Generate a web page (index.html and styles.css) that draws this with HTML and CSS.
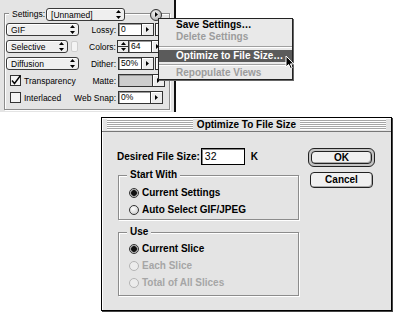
FILE: index.html
```html
<!DOCTYPE html>
<html lang="en">
<head>
  <meta charset="UTF-8">
  <title>Optimize To File Size</title>
  <link rel="stylesheet" href="styles.css">
</head>
<body>
  <div class="palette">
    <div class="group">
      <div class="group-head">
        <span class="head-label">Settings:</span>
        <div class="popup w-name"><span>[Unnamed]</span><svg class="ud" width="5" height="9" viewBox="0 0 5 9"><path d="M2.5 0L5 3H0Z M0 6H5L2.5 9Z"/></svg></div>
        <span class="round-btn"><svg width="3" height="5" viewBox="0 0 3 5"><path d="M0 0L3 2.5L0 5Z"/></svg></span>
      </div>
      <div class="rows">
        <div class="prow">
          <div class="pleft"><div class="popup w-wide"><span>GIF</span><svg class="ud" width="5" height="9" viewBox="0 0 5 9"><path d="M2.5 0L5 3H0Z M0 6H5L2.5 9Z"/></svg></div></div>
          <span class="plabel">Lossy:</span>
          <div class="field w-num">0</div>
          <div class="abtn"><svg width="3" height="5" viewBox="0 0 3 5"><path d="M0 0L3 2.5L0 5Z"/></svg></div>
          <div class="stub"></div>
        </div>
        <div class="prow">
          <div class="pleft"><div class="popup w-mid"><span>Selective</span><svg class="ud" width="5" height="9" viewBox="0 0 5 9"><path d="M2.5 0L5 3H0Z M0 6H5L2.5 9Z"/></svg></div><span class="lock"></span></div>
          <span class="plabel">Colors:</span>
          <div class="spin">
            <svg width="5" height="3" viewBox="0 0 5 3"><path d="M2.5 0L5 3H0Z"/></svg>
            <span class="spin-line"></span>
            <svg width="5" height="3" viewBox="0 0 5 3"><path d="M0 0H5L2.5 3Z"/></svg>
          </div>
          <div class="field w-num">64</div>
          <div class="abtn"><svg width="3" height="5" viewBox="0 0 3 5"><path d="M0 0L3 2.5L0 5Z"/></svg></div>
        </div>
        <div class="prow">
          <div class="pleft"><div class="popup w-wide"><span>Diffusion</span><svg class="ud" width="5" height="9" viewBox="0 0 5 9"><path d="M2.5 0L5 3H0Z M0 6H5L2.5 9Z"/></svg></div></div>
          <span class="plabel">Dither:</span>
          <div class="field w-num">50%</div>
          <div class="abtn"><svg width="3" height="5" viewBox="0 0 3 5"><path d="M0 0L3 2.5L0 5Z"/></svg></div>
          <div class="stub"></div>
        </div>
        <div class="prow">
          <div class="pleft">
            <span class="check"><svg width="11" height="11" viewBox="0 0 11 11"><path d="M2 5.5L4.5 8.5L10.5 0.5" fill="none" stroke="#000" stroke-width="1.4"/></svg></span>
            <span class="check-label">Transparency</span>
          </div>
          <span class="plabel">Matte:</span>
          <div class="field w-matte dim"></div>
          <div class="abtn"><svg width="3" height="5" viewBox="0 0 3 5"><path d="M0 0L3 2.5L0 5Z"/></svg></div>
        </div>
        <div class="prow">
          <div class="pleft">
            <span class="check"></span>
            <span class="check-label">Interlaced</span>
          </div>
          <span class="plabel">Web Snap:</span>
          <div class="field w-snap">0%</div>
          <div class="abtn"><svg width="3" height="5" viewBox="0 0 3 5"><path d="M0 0L3 2.5L0 5Z"/></svg></div>
        </div>
      </div>
    </div>
  </div>

  <div class="dialog">
    <div class="titlebar">
      <span class="stripes"></span>
      <span class="title">Optimize To File Size</span>
      <span class="stripes"></span>
    </div>
    <div class="dlg-body">
      <div class="dlg-left">
        <div class="size-row">
          <span>Desired File Size:</span>
          <span class="size-input">32</span>
          <span class="unit">K</span>
        </div>
        <fieldset class="grp">
          <legend>Start With</legend>
          <div class="opt"><span class="radio on"></span>Current Settings</div>
          <div class="opt"><span class="radio"></span>Auto Select GIF/JPEG</div>
        </fieldset>
        <fieldset class="grp grp-use">
          <legend>Use</legend>
          <div class="opt"><span class="radio on"></span>Current Slice</div>
          <div class="opt off"><span class="radio"></span>Each Slice</div>
          <div class="opt off"><span class="radio"></span>Total of All Slices</div>
        </fieldset>
      </div>
      <div class="btn-col">
        <div class="ring"><div class="btn">OK</div></div>
        <div class="btn cancel">Cancel</div>
      </div>
    </div>
  </div>

  <div class="menu">
    <div class="mi">Save Settings…</div>
    <div class="mi off">Delete Settings</div>
    <div class="sep first"></div>
    <div class="mi hot">Optimize to File Size…</div>
    <div class="sep"></div>
    <div class="mi off">Repopulate Views</div>
  </div>

  <svg class="cursor" width="10" height="15" viewBox="0 0 10 15">
    <path d="M1 1V12L3.6 9.5L5.5 13.6L7.2 12.8L5.4 8.9H8.8Z" fill="#000" stroke="#fff" stroke-width="1"/>
  </svg>
</body>
</html>
```

FILE: styles.css
```css
body {
  margin: 0;
  background: #fff;
  font-family: 'Liberation Sans', Arial, sans-serif;
  color: #000;
  position: relative;
  width: 396px;
  height: 313px;
  overflow: hidden;
}

/* palette */
.palette {
  width: 176px;
  height: 112px;
  box-sizing: border-box;
  padding-top: 13px;
  background: #e4e4e4;
  border-right: 2px solid #111;
  font-size: 8.5px;
}
.group {
  margin-left: 4px;
  width: 166px;
  height: 97px;
  box-sizing: border-box;
  padding-left: 1px;
  border: 1px solid #8c8c8c;
  box-shadow: inset 1px 1px 0 #fff, 1px 1px 0 #fff;
}
.group-head {
  display: flex;
  align-items: center;
  height: 13px;
  margin-top: -6px;
}
.head-label {
  background: #e4e4e4;
  margin-left: 3px;
  padding: 0 1px 0 3px;
  line-height: 13px;
}
.popup {
  height: 13px;
  box-sizing: border-box;
  display: flex;
  align-items: center;
  justify-content: space-between;
  padding: 0 3px 0 4px;
  border: 1px solid #3a3a3a;
  border-radius: 3px;
  background: #efefef;
  box-shadow: inset 1px 1px 0 #fff;
}
.w-name { width: 79px; }
.w-wide { width: 73px; }
.w-mid { width: 62px; }
.round-btn {
  width: 12px;
  height: 12px;
  box-sizing: border-box;
  margin-left: 25px;
  display: flex;
  align-items: center;
  justify-content: center;
  padding-left: 1px;
  border: 1px solid #333;
  border-radius: 50%;
  background: radial-gradient(circle at 40% 35%, #f4f4f4, #a4a4a4);
}
.rows {
  display: flex;
  flex-direction: column;
  gap: 4px;
  margin-top: 2px;
}
.prow {
  display: flex;
  align-items: center;
  height: 13px;
}
.pleft {
  width: 74px;
  display: flex;
  align-items: center;
  white-space: nowrap;
}
.plabel {
  width: 36px;
  display: flex;
  justify-content: flex-end;
  white-space: nowrap;
  margin-right: 2px;
}
.field {
  height: 13px;
  box-sizing: border-box;
  padding-left: 2px;
  line-height: 11px;
  border: 1px solid #333;
  background: #fff;
  box-shadow: inset 1px 1px 0 #999;
}
.field.dim { background: #cdcdcd; }
.w-num { width: 24px; }
.w-matte { width: 35px; }
.w-snap { width: 33px; }
.abtn, .stub {
  width: 13px;
  height: 13px;
  box-sizing: border-box;
  margin-left: -1px;
  display: flex;
  align-items: center;
  justify-content: center;
  border: 1px solid #333;
  background: #ececec;
  box-shadow: inset 1px 1px 0 #fff;
}
.stub { margin-left: 1px; }
.spin {
  width: 12px;
  height: 13px;
  box-sizing: border-box;
  margin-left: -1px;
  margin-right: -1px;
  display: flex;
  flex-direction: column;
  align-items: center;
  justify-content: space-around;
  border: 1px solid #333;
  background: #ececec;
}
.spin-line {
  width: 100%;
  height: 1px;
  background: #333;
}
.lock {
  width: 7px;
  height: 11px;
  box-sizing: border-box;
  margin-left: 3px;
  border: 1px solid #cfcfcf;
  border-radius: 2px;
  background: #f4f4f4;
}
.check {
  width: 11px;
  height: 11px;
  box-sizing: border-box;
  margin-left: 4px;
  border: 1px solid #333;
  background: #f4f4f4;
  position: relative;
}
.check svg {
  position: absolute;
  left: -1px;
  top: -1px;
}
.check-label { margin-left: 3px; }

/* dialog */
.dialog {
  margin: 5px 0 0 101px;
  width: 291px;
  box-sizing: border-box;
  border: 1px solid #000;
  box-shadow: 1px 1px 0 #444;
  background: #e4e4e4;
  font-size: 10px;
  font-weight: bold;
}
.titlebar {
  height: 14px;
  box-sizing: border-box;
  display: flex;
  align-items: center;
  gap: 4px;
  padding: 0 5px;
  border-bottom: 1px solid #777;
  box-shadow: inset 1px 1px 0 #fff;
}
.stripes {
  flex: 1;
  height: 11px;
  background: repeating-linear-gradient(#fff 0 1px, #a6a6a6 1px 2px);
}
.title { line-height: 13px; }
.dlg-body {
  display: flex;
  gap: 9px;
  padding: 16px 16px 14px 15px;
  box-shadow: inset 1px 0 0 #fff;
}
.dlg-left { width: 182px; }
.size-row {
  display: flex;
  align-items: center;
  height: 17px;
}
.size-input {
  width: 44px;
  height: 17px;
  box-sizing: border-box;
  margin-left: 1px;
  padding-left: 3px;
  line-height: 15px;
  font-weight: normal;
  font-size: 10.5px;
  border: 1px solid #000;
  background: #fff;
  box-shadow: inset 1px 1px 0 #888;
}
.unit { margin-left: 6px; }
.grp {
  width: 181px;
  box-sizing: border-box;
  margin: 4px 0 0 1px;
  padding: 3px 0 1px 0;
  border: 1px solid #8c8c8c;
  box-shadow: inset 1px 1px 0 #fff, 1px 1px 0 #fff;
}
.grp legend {
  margin-left: 8px;
  padding: 0 3px;
  line-height: 12px;
  background: #e4e4e4;
}
.grp-use {
  margin-top: 6px;
  padding: 2px 0 4px 0;
}
.opt {
  display: flex;
  align-items: center;
  height: 17px;
  margin-left: 10px;
}
.opt.off { color: #a6a6a6; }
.radio {
  width: 10px;
  height: 10px;
  box-sizing: border-box;
  margin-right: 3px;
  border: 1px solid #333;
  border-radius: 50%;
  background: radial-gradient(circle at 40% 35%, #fff, #c4c4c4);
}
.radio.on {
  background: radial-gradient(circle, #111 0 2.5px, #777 3px, #ddd 4px);
}
.opt.off .radio {
  border-color: #b4b4b4;
  background: #ececec;
}
.btn-col {
  width: 67px;
  display: flex;
  flex-direction: column;
  align-items: center;
  gap: 5px;
}
.ring {
  width: 67px;
  height: 19px;
  box-sizing: border-box;
  padding: 2px;
  border: 1px solid #222;
  border-radius: 6px;
  background: #c4c4c4;
}
.btn {
  height: 13px;
  box-sizing: border-box;
  line-height: 11px;
  text-align: center;
  border: 1px solid #222;
  border-radius: 4px;
  background: #f0f0f0;
  box-shadow: inset -1px -1px 0 #aaa;
}
.btn.cancel {
  width: 63px;
  height: 16px;
  line-height: 14px;
}

/* popup menu */
.menu {
  position: absolute;
  left: 158px;
  top: 18px;
  width: 135px;
  box-sizing: border-box;
  border: 1px solid #222;
  box-shadow: 1px 1px 0 #666;
  background: #e9e9e9;
  font-size: 10px;
  font-weight: bold;
}
.mi {
  height: 12px;
  line-height: 12px;
  padding-left: 17px;
  white-space: nowrap;
}
.mi.off { color: #9c9c9c; }
.mi.hot {
  background: #5b5b5b;
  color: #fff;
}
.sep {
  height: 5px;
  box-sizing: border-box;
  padding-top: 2px;
}
.sep.first {
  height: 7px;
  padding-top: 3px;
}
.sep::before {
  content: "";
  display: block;
  height: 1px;
  background: #a0a0a0;
  border-bottom: 1px solid #fff;
}
.cursor {
  position: absolute;
  left: 285px;
  top: 55px;
}
```
